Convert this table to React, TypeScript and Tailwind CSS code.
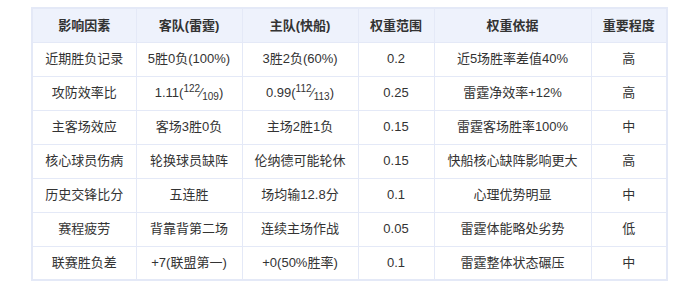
import React from "react";

type Row = {
    factor: string;
    away: React.ReactNode;
    home: React.ReactNode;
    weight: string;
    basis: string;
    level: string;
};

const Frac = ({ a, b }: { a: string; b: string }) => (
    <>
        (<sup className="text-[10px]">{a}</sup>
        <span>⁄</span>
        <sub className="text-[10px]">{b}</sub>)
    </>
);

const rows: Row[] = [
    { factor: "近期胜负记录", away: "5胜0负(100%)", home: "3胜2负(60%)", weight: "0.2", basis: "近5场胜率差值40%", level: "高" },
    { factor: "攻防效率比", away: <>1.11<Frac a="122" b="109" /></>, home: <>0.99<Frac a="112" b="113" /></>, weight: "0.25", basis: "雷霆净效率+12%", level: "高" },
    { factor: "主客场效应", away: "客场3胜0负", home: "主场2胜1负", weight: "0.15", basis: "雷霆客场胜率100%", level: "中" },
    { factor: "核心球员伤病", away: "轮换球员缺阵", home: "伦纳德可能轮休", weight: "0.15", basis: "快船核心缺阵影响更大", level: "高" },
    { factor: "历史交锋比分", away: "五连胜", home: "场均输12.8分", weight: "0.1", basis: "心理优势明显", level: "中" },
    { factor: "赛程疲劳", away: "背靠背第二场", home: "连续主场作战", weight: "0.05", basis: "雷霆体能略处劣势", level: "低" },
    { factor: "联赛胜负差", away: "+7(联盟第一)", home: "+0(50%胜率)", weight: "0.1", basis: "雷霆整体状态碾压", level: "中" },
];

const headers = ["影响因素", "客队(雷霆)", "主队(快船)", "权重范围", "权重依据", "重要程度"];

export default function App() {
    return (
        <div
            className="w-[699px] h-[306px] bg-white pt-[7px] flex justify-center"
            style={{ fontFamily: '"Liberation Sans", "Noto Sans CJK SC", sans-serif' }}
        >
            <table className="table-fixed border-collapse border-2 border-[#e4e9f7] w-[635px] h-max text-[13px] text-[#333]">
                <colgroup>
                    <col className="w-[104px]" />
                    <col className="w-[106px]" />
                    <col className="w-[116px]" />
                    <col className="w-[76px]" />
                    <col className="w-[157px]" />
                    <col className="w-[76px]" />
                </colgroup>
                <thead>
                    <tr className="bg-[#eef2fc]">
                        {headers.map((h) => (
                            <th key={h} className="h-[34px] p-0 border border-[#e4e9f7] font-bold text-center">{h}</th>
                        ))}
                    </tr>
                </thead>
                <tbody>
                    {rows.map((r) => (
                        <tr key={r.factor}>
                            <td className="h-[34px] p-0 border border-[#e4e9f7] text-center">{r.factor}</td>
                            <td className="h-[34px] p-0 border border-[#e4e9f7] text-center">{r.away}</td>
                            <td className="h-[34px] p-0 border border-[#e4e9f7] text-center">{r.home}</td>
                            <td className="h-[34px] p-0 border border-[#e4e9f7] text-center">{r.weight}</td>
                            <td className="h-[34px] p-0 border border-[#e4e9f7] text-center">{r.basis}</td>
                            <td className="h-[34px] p-0 border border-[#e4e9f7] text-center">{r.level}</td>
                        </tr>
                    ))}
                </tbody>
            </table>
        </div>
    );
}
